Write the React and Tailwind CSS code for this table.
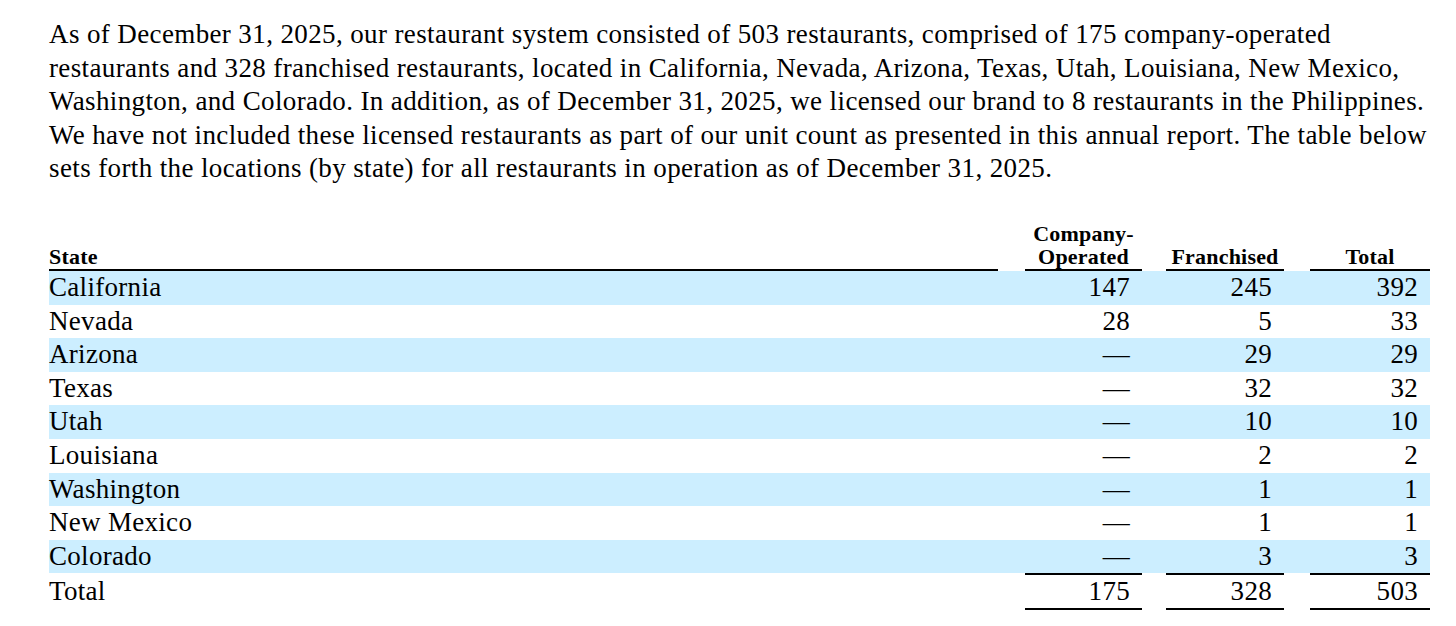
import React from 'react';

// Restaurant locations by state — as of December 31, 2025

const LINES = [
  'As of December 31, 2025, our restaurant system consisted of 503 restaurants, comprised of 175 company-operated',
  'restaurants and 328 franchised restaurants, located in California, Nevada, Arizona, Texas, Utah, Louisiana, New Mexico,',
  'Washington, and Colorado. In addition, as of December 31, 2025, we licensed our brand to 8 restaurants in the Philippines.',
  'We have not included these licensed restaurants as part of our unit count as presented in this annual report. The table below',
  'sets forth the locations (by state) for all restaurants in operation as of December 31, 2025.',
];

const ROWS = [
  { state: 'California', company: '147', franchised: '245', total: '392' },
  { state: 'Nevada', company: '28', franchised: '5', total: '33' },
  { state: 'Arizona', company: '—', franchised: '29', total: '29' },
  { state: 'Texas', company: '—', franchised: '32', total: '32' },
  { state: 'Utah', company: '—', franchised: '10', total: '10' },
  { state: 'Louisiana', company: '—', franchised: '2', total: '2' },
  { state: 'Washington', company: '—', franchised: '1', total: '1' },
  { state: 'New Mexico', company: '—', franchised: '1', total: '1' },
  { state: 'Colorado', company: '—', franchised: '3', total: '3' },
];

const serif = { fontFamily: '"Liberation Serif", "Times New Roman", serif' };

export default function App() {
  return (
    <div className="min-h-screen bg-white text-black" style={serif}>
      <div className="pl-[49px] pr-[20px] pt-[18px]">
        <p className="text-[27px] tracking-[0.38px] leading-[33.6px] whitespace-nowrap">
          {LINES.map(l => (
            <span key={l} className="block">{l}</span>
          ))}
        </p>

        {/* Table */}
        <div className="w-[1381px] mt-[36px]">
          {/* Header */}
          <div className="flex items-end font-bold text-[22px] tracking-[0.2px] leading-[23px]">
            <div className="w-[949px] border-b-2 border-black pb-[1px]">State</div>
            <div className="ml-[27px] w-[117px] border-b-2 border-black pb-[1px] text-center">
              Company-<br />Operated
            </div>
            <div className="ml-[24px] w-[118px] border-b-2 border-black pb-[1px] text-center">Franchised</div>
            <div className="ml-[26px] w-[120px] border-b-2 border-black pb-[1px] text-center">Total</div>
          </div>

          {/* Rows */}
          {ROWS.map((r, i) => (
            <div key={r.state}
              className={`flex h-[33.6px] items-center text-[27px] tracking-[0.3px] leading-[33.6px] ${i % 2 === 0 ? 'bg-[#cceeff]' : 'bg-white'}`}>
              <div className="w-[949px]">{r.state}</div>
              <div className="ml-[27px] w-[117px] text-right pr-[12px]">{r.company}</div>
              <div className="ml-[24px] w-[118px] text-right pr-[12px]">{r.franchised}</div>
              <div className="ml-[26px] w-[120px] text-right pr-[12px]">{r.total}</div>
            </div>
          ))}

          {/* Total row */}
          <div className="flex text-[27px] tracking-[0.3px] leading-[33px]">
            <div className="w-[949px] pt-[2px]">Total</div>
            <div className="ml-[27px] w-[117px] text-right pr-[12px] border-t-2 border-b-2 border-black">175</div>
            <div className="ml-[24px] w-[118px] text-right pr-[12px] border-t-2 border-b-2 border-black">328</div>
            <div className="ml-[26px] w-[120px] text-right pr-[12px] border-t-2 border-b-2 border-black">503</div>
          </div>
        </div>
      </div>
    </div>
  );
}
